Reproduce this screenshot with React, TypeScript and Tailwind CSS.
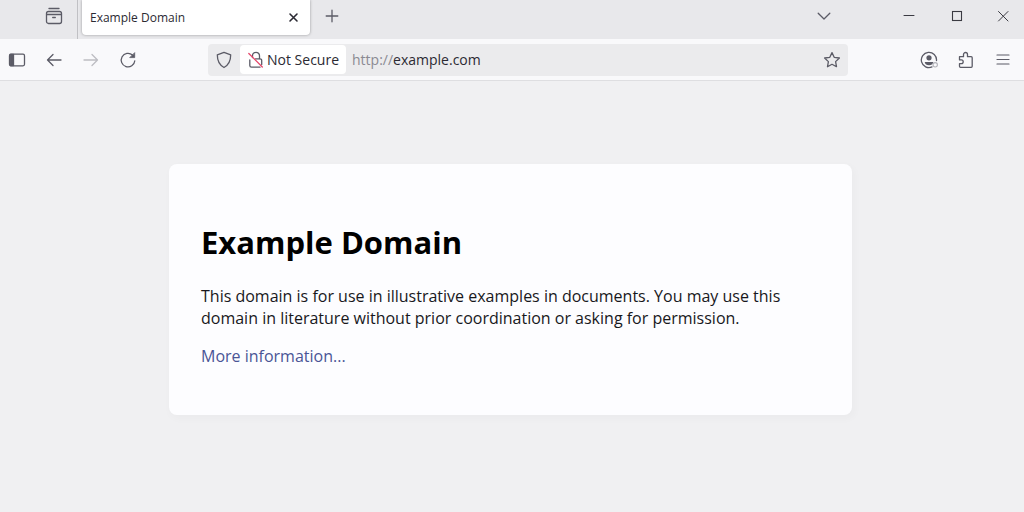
import type { ReactNode } from "react";

type IconProps = {
  children: ReactNode;
  className?: string;
};

// All chrome icons are drawn on an 18px grid
function Icon({ children, className = "" }: IconProps) {
  return (
    <svg
      viewBox="0 0 18 18"
      className={`size-[18px] shrink-0 ${className}`}
      fill="none"
      stroke="currentColor"
      strokeWidth="1.3"
      strokeLinecap="round"
      strokeLinejoin="round"
      aria-hidden="true"
    >
      {children}
    </svg>
  );
}

type IconButtonProps = IconProps & {
  label: string;
  disabled?: boolean;
};

function IconButton({ label, disabled, className = "", children }: IconButtonProps) {
  return (
    <button
      type="button"
      aria-label={label}
      disabled={disabled}
      className={`flex h-8 shrink-0 items-center justify-center ${className}`}
    >
      <Icon>{children}</Icon>
    </button>
  );
}

function TabBar() {
  return (
    <div className="flex h-[39px] bg-[#e8e8eb] text-[#5b5b66]">
      {/* Firefox view */}
      <div className="flex w-[78px] justify-end border-r border-[#c0c0c4] pr-1">
        <IconButton label="View recent browsing" className="w-[38px]">
          <path d="M4 1.500h10" />
          <rect x="1.500" y="4.500" width="15" height="12" rx="2" />
          <path d="M1.600 7.500h14.800" />
          <path d="M7.700 10.500h2.600" />
        </IconButton>
      </div>

      {/* Active tab */}
      <div className="ml-1 flex h-[35px] w-[228px] items-center justify-between rounded-b-sm bg-white pr-1 pl-2 shadow-[0_0_3px_rgba(0,0,0,0.35)]">
        <span className="text-xs text-[#2b2a33]">Example Domain</span>
        <IconButton label="Close tab" className="w-6 text-[#2b2a33]">
          <path d="M5 5l7 7M12 5l-7 7" strokeWidth="1.6" />
        </IconButton>
      </div>
      <IconButton label="New tab" className="ml-1 w-9">
        <path d="M9 3.200v11.600M3.200 9h11.600" />
      </IconButton>

      {/* Window controls */}
      <div className="ml-auto flex">
        <IconButton label="List all tabs" className="mr-[43px] w-9">
          <path d="M3.200 6.200L9 12l5.800-5.800" />
        </IconButton>
        <IconButton label="Minimize" className="w-12 text-[#3a3a42]">
          <path d="M4 8.500h10" strokeWidth="1" />
        </IconButton>
        <IconButton label="Maximize" className="w-12 text-[#3a3a42]">
          <rect x="4.500" y="4.500" width="9" height="9" strokeWidth="1.1" strokeLinejoin="miter" />
        </IconButton>
        <IconButton label="Close" className="w-[43px] text-[#3a3a42]">
          <path d="M4.500 4.500l9.500 9.500M14 4.500L4.500 14" strokeWidth="1" />
        </IconButton>
      </div>
    </div>
  );
}

function AddressBar() {
  return (
    <div className="mr-[62px] ml-[63px] flex h-8 min-w-0 flex-1 items-center rounded-sm bg-[#ebebed] text-[#5b5b66]">
      <IconButton label="Tracking protection" className="w-8">
        <path d="M9 1.300L2.300 3.800c0 5.500 1.500 10 6.700 12.700 5.200-2.700 6.700-7.200 6.700-12.700z" />
      </IconButton>
      <button
        type="button"
        className="flex h-[29px] shrink-0 items-center gap-0.5 rounded-sm bg-white px-[7px] text-sm text-[#2b2a33]"
      >
        <Icon className="text-[#5b5b66]">
          <path d="M5.500 6.500V4.800a3.500 3.500 0 0 1 7 0V7.500" />
          <path d="M2.800 9v5.500a1.700 1.700 0 0 0 1.700 1.700h8.500M8.500 7.800h4.500a1.700 1.700 0 0 1 1.700 1.700v4" />
          <path d="M1.800 2.500l13.500 13.500" stroke="#e5486c" />
        </Icon>
        Not Secure
      </button>
      <label htmlFor="address" className="pl-1.5 text-sm text-[#8a8a92]">
        http://
      </label>
      <input
        id="address"
        type="text"
        defaultValue="example.com"
        className="min-w-0 flex-1 bg-transparent text-sm text-[#2b2a33] outline-none"
      />
      <IconButton label="Bookmark this page" className="w-8">
        <path d="M9 1.600l2.200 4.700 5.200.7-3.800 3.600.9 5.100L9 13.300l-4.500 2.400.9-5.100L1.600 7l5.200-.7z" />
      </IconButton>
    </div>
  );
}

function Toolbar() {
  return (
    <div className="flex h-[42px] items-center border-b border-[#dedee1] bg-[#f9f9fb] text-[#5b5b66]">
      <div className="flex gap-[3px]">
        <IconButton label="Sidebar" className="w-[34px]">
          <rect x="1.500" y="3.200" width="15" height="11.600" rx="1.500" />
          <path d="M2.200 3.500h3.300v11H2.200z" fill="currentColor" />
        </IconButton>
        <IconButton label="Back" className="w-[34px]">
          <path d="M16 9H2.500M8 3.500L2.500 9 8 14.500" />
        </IconButton>
        <IconButton label="Forward" disabled className="w-[34px] text-[#bdbdc2]">
          <path d="M2 9h13.500M10 3.500L15.500 9 10 14.500" />
        </IconButton>
        <IconButton label="Reload" className="w-[34px]">
          <path d="M15.800 9.800A6.800 6.800 0 1 1 13.500 4" />
          <path d="M15.700 2v4.600h-4.600z" fill="currentColor" strokeWidth="0.8" />
        </IconButton>
      </div>

      <AddressBar />

      <div className="flex pr-[3px]">
        <IconButton label="Account" className="w-[37px]">
          <path d="M12 15.900A7.600 7.600 0 1 1 16.500 9.500" />
          <circle cx="9" cy="6.800" r="2.600" fill="currentColor" stroke="none" />
          <path d="M4.700 11h8.600c-.3 2.200-2 3.300-4.300 3.300S5 13.200 4.700 11z" fill="currentColor" stroke="none" />
          <circle cx="15.200" cy="13.800" r="2.200" stroke="#b4b4ba" strokeWidth="1.100" />
        </IconButton>
        <IconButton label="Extensions" className="w-[37px]">
          <path d="M2.500 5.700h4V3.500a2 2 0 0 1 4 0v2.200h3.700a1 1 0 0 1 1 1v8.600a1 1 0 0 1-1 1H3.500a1 1 0 0 1-1-1v-2.600h1.800a1.900 1.900 0 0 0 0-3.800H2.500z" />
        </IconButton>
        <IconButton label="Application menu" className="w-[37px]">
          <path d="M3 4h12M3 8.500h12M3 13h12" strokeWidth="1.200" />
        </IconButton>
      </div>
    </div>
  );
}

function App() {
  return (
    <div className="flex min-h-screen flex-col bg-[#f0f0f2] font-['Open_Sans','Noto_Sans',sans-serif]">
      <header>
        <TabBar />
        <Toolbar />
      </header>

      {/* Page content */}
      <main className="flex-1 pt-[83px] pr-[3px]">
        <article className="mx-auto max-w-[683px] rounded-lg bg-[#fdfdff] px-8 pt-14 pb-12 text-black shadow-[2px_3px_7px_2px_rgba(0,0,0,0.02)]">
          <h1 className="text-[31px] leading-[45px] font-bold">Example Domain</h1>
          <p className="mt-5 max-w-[600px] text-base leading-[22px] text-[#18181c]">
            This domain is for use in illustrative examples in documents. You may use this
            domain in literature without prior coordination or asking for permission.
          </p>
          <p className="mt-4 text-base leading-[22px]">
            <a href="https://www.iana.org/domains/example" className="text-[#4a5596]">
              More information...
            </a>
          </p>
        </article>
      </main>
    </div>
  );
}

export default App;
